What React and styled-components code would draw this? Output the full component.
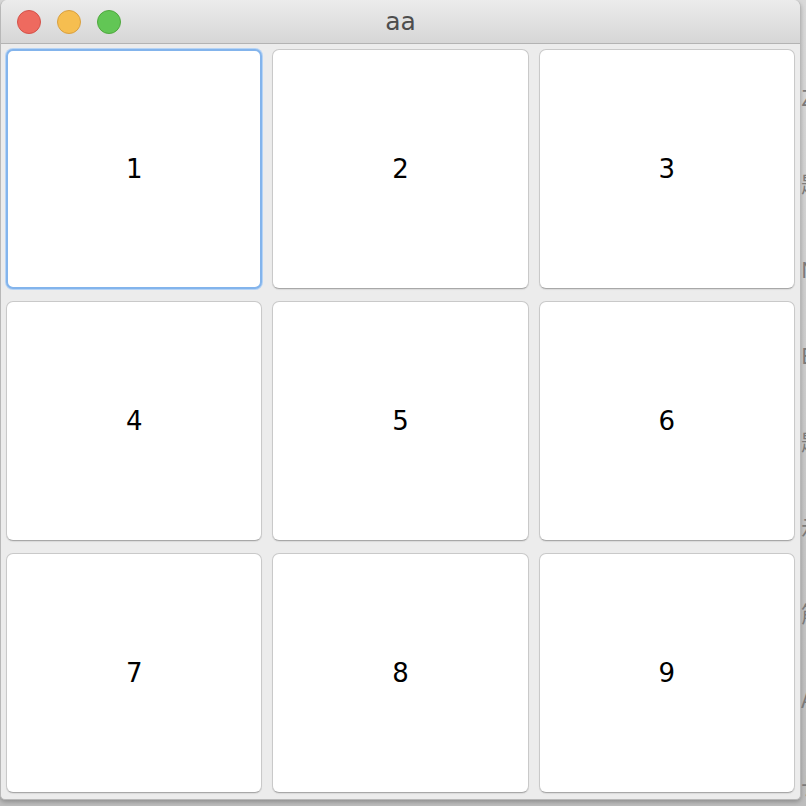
import * as React from "react";
import { useState } from "react";
import { styled, createGlobalStyle } from "styled-components";

const GlobalStyle = createGlobalStyle`
  html, body {
    margin: 0;
    padding: 0;
    background: #cfcfcf;
  }
  body {
    font-family: "DejaVu Sans", "Liberation Sans", sans-serif;
  }
`;

const Desktop = styled.div`
  width: 806px;
  height: 806px;
  display: flex;
  overflow: hidden;
  background: linear-gradient(#d9d9d9, #bdbdbd);
`;

const Window = styled.div`
  width: 801px;
  height: 800px;
  flex: none;
  display: flex;
  flex-direction: column;
  background: #ececec;
  border: 1px solid #b8b8b8;
  border-top: none;
  box-sizing: border-box;
  border-radius: 7px 7px 5px 5px;
  overflow: hidden;
  box-shadow: 0 2px 4px rgba(0, 0, 0, 0.25);
`;

const TitleBar = styled.div`
  height: 43px;
  flex: none;
  display: flex;
  align-items: center;
  position: relative;
  background: linear-gradient(#ececec, #d6d6d6);
  border-bottom: 1px solid #b3b3b3;
`;

const Lights = styled.div`
  display: flex;
  gap: 16px;
  padding-left: 16px;
`;

const Light = styled.span`
  width: 24px;
  height: 24px;
  border-radius: 50%;
  box-sizing: border-box;
  background: ${(p) => p.fill};
  border: 1px solid ${(p) => p.edge};
`;

const Title = styled.div`
  position: absolute;
  left: 0;
  right: 0;
  top: 0;
  bottom: 0;
  display: flex;
  align-items: center;
  justify-content: center;
  font-family: "DejaVu Sans", sans-serif;
  font-size: 25px;
  color: #4d4d4d;
  pointer-events: none;
`;

const Grid = styled.div`
  flex: 1;
  display: grid;
  grid-template-columns: repeat(3, 1fr);
  grid-template-rows: repeat(3, 1fr);
  column-gap: 10px;
  row-gap: 12px;
  padding: 5px 5px 6px 5px;
`;

const Cell = styled.button`
  background: #ffffff;
  border: 1px solid #c9c9c9;
  border-bottom-color: #a8a8a8;
  border-radius: 7px;
  box-shadow: 0 1px 1px rgba(0, 0, 0, 0.08);
  font-family: "DejaVu Sans", "Liberation Sans", sans-serif;
  font-size: 26px;
  color: #000;
  padding: 0;
  cursor: pointer;
  outline: none;
  ${(p) =>
    p.focused &&
    `
    border: 2px solid #83b4ec;
    box-shadow: 0 0 0 1px #b5d3f5;
  `}
`;

const Behind = styled.div`
  flex: 1;
  display: flex;
  flex-direction: column;
  gap: 54px;
  padding-top: 80px;
  font-family: "Noto Sans CJK SC", sans-serif;
  font-size: 22px;
  color: #7a7a7a;
  white-space: nowrap;
  overflow: hidden;
`;

const lights = [
  { fill: "#ee6a5f", edge: "#d4524a" },
  { fill: "#f6be50", edge: "#d9a040" },
  { fill: "#62c655", edge: "#4fa83e" },
];

const behindChars = ["Z", "题", "N", "E", "题", "示", "筋", "A", "长", "I"];

export default function App() {
  const [active, setActive] = useState(0);
  return (
    <>
      <GlobalStyle />
      <Desktop>
        <Window>
          <TitleBar>
            <Lights>
              {lights.map((l, i) => (
                <Light key={i} fill={l.fill} edge={l.edge} />
              ))}
            </Lights>
            <Title>aa</Title>
          </TitleBar>
          <Grid>
            {[1, 2, 3, 4, 5, 6, 7, 8, 9].map((n, i) => (
              <Cell key={n} focused={active === i} onClick={() => setActive(i)}>
                {n}
              </Cell>
            ))}
          </Grid>
        </Window>
        <Behind>
          {behindChars.map((c, i) => (
            <span key={i}>{c}</span>
          ))}
        </Behind>
      </Desktop>
    </>
  );
}
